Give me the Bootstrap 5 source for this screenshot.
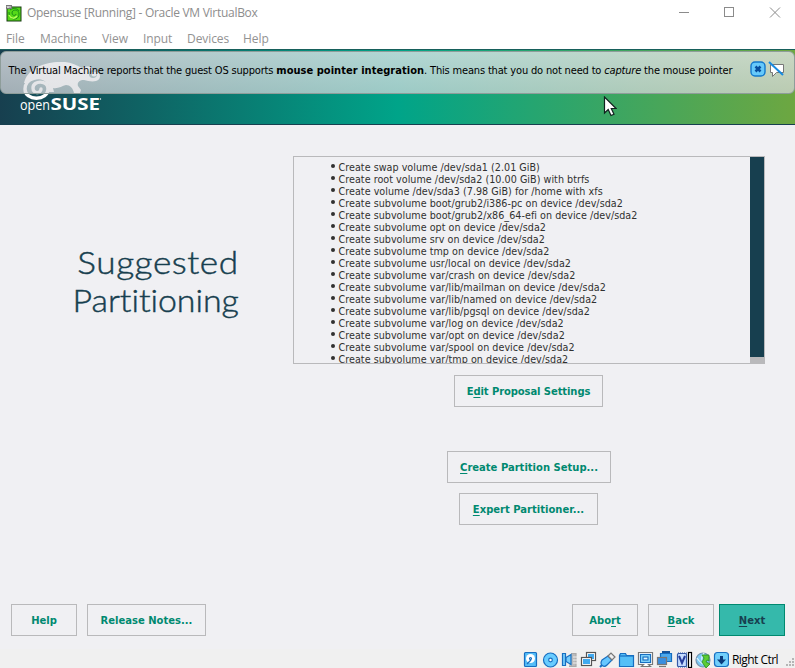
<!DOCTYPE html>
<html lang="en">
<head>
<meta charset="utf-8">
<title>Opensuse [Running] - Oracle VM VirtualBox</title>
<link href="https://cdn.jsdelivr.net/npm/bootstrap@5.3.0/dist/css/bootstrap.min.css" rel="stylesheet">
<style>
body{width:795px;height:668px;overflow:hidden;background:#f0f0f3;font-family:"DejaVu Sans",sans-serif}
svg{display:block;flex:none}
.win-title{height:26px;padding-left:6px;font:12px/26px "Open Sans",sans-serif;color:#8d8d8d}
.win-title .caption{margin-left:5px;letter-spacing:-.28px}
.win-menu{height:23px;padding-left:6px;font:12px/26px "Open Sans",sans-serif;color:#929292;letter-spacing:-.08px}
.win-menu span{white-space:nowrap}
.banner{height:76px;background:linear-gradient(90deg,#173f4f 0,#00a489 50%,#6da741 100%);border-top:1px solid #17605b;border-bottom:1px solid #173f4f}
.brand{position:absolute;left:18px;top:12px}
.notice{position:absolute;left:0;top:1px;width:795px;height:43px;border:1px solid #8e9d9a;border-radius:6px;background:linear-gradient(rgba(228,229,233,.78),rgba(216,217,221,.72));padding-left:7.500px;font:11px/37px "DejaVu Sans Condensed","DejaVu Sans",sans-serif;font-stretch:condensed;color:#000;white-space:nowrap;letter-spacing:-.168px}
.notice b{letter-spacing:.04px}
.pointer{position:absolute;left:603px;top:46px}
.content{height:479px;padding-top:31px}
.heading{width:239px;padding-top:87px;font:300 32px/38px Lato,sans-serif;font-variant-ligatures:none;color:#173f4f;text-align:right;-webkit-text-stroke:.45px #173f4f}
.heading span{display:inline-block;transform-origin:right}
.line-a{letter-spacing:.5px;transform:scaleX(1.1)}
.line-b{transform:scaleX(1.06);letter-spacing:-.05px}
.main-col{width:472px;margin-left:54px}
.proposal{height:208px;border:1px solid #b9b9bb;overflow:hidden}
.proposal ul{margin:5px 0 0;padding:0 0 0 37px;list-style:none;font-size:9.6px;line-height:12px;color:#303030;white-space:nowrap;letter-spacing:.03px}
.proposal li{height:12px}
.proposal li::before{content:"";display:inline-block;width:4px;height:4px;border-radius:50%;background:#303030;margin-right:3.500px;vertical-align:3px}
.scroll-track{width:14px;background:#b9b9bb}
.thumb{height:200px;background:#173f4f}
.yast{--bs-btn-border-radius:0;--bs-btn-padding-x:0;--bs-btn-padding-y:0;--bs-btn-color:#008970;--bs-btn-border-color:#b9b9bb;height:32px;font:bold 10px/30px "DejaVu Sans",sans-serif;padding-top:1px}
.yast u{text-underline-offset:2px;text-decoration-thickness:1px;text-decoration-skip-ink:none}
.yast-next{--bs-btn-color:#173f4f;--bs-btn-bg:#35b9ab;--bs-btn-border-color:#008970}
.w66{width:66px}.w119{width:119px}.w149{width:149px;margin-right:1px}.w164{width:164px}.w139{width:139px;margin-right:1px}
.foot{height:45px;padding:0 10px 0 11px}
.status{height:19px;background:#f0f0f0;padding-left:523px;font:12px/21px "Open Sans",sans-serif;color:#000}
.status svg{margin-top:2px}
</style>
</head>
<body>
<header class="bg-white">
<div class="win-title d-flex align-items-center">
<svg width="16" height="17" viewBox="0 0 16 17"><rect x=".5" y="1.500" width="15" height="15" fill="#173a12"/><rect x="1.500" y="2.500" width="13" height="13" fill="#55d918"/><path d="M3 7c0 9 10 9 10 2 0-5-7-5-7-1 0 3 4 3 4 1M4 5c4-3 8-1 9 1" fill="none" stroke="#199016" stroke-width="1"/><path d="M3 10c2 4 6 4 8 1" fill="none" stroke="#b7ff57" stroke-width="1.500"/><path d="M0 0h6v4H0z" fill="#777"/><path d="M1 1l1 2 1-2M4 1v2" stroke="#fff" fill="none" stroke-width=".8"/></svg>
<span class="caption">Opensuse [Running] - Oracle VM VirtualBox</span>
<svg class="ms-auto" width="116" height="26" viewBox="679 0 116 26" fill="none" stroke="#8b8b8b"><path d="M679 12.500h10"/><rect x="724.500" y="7.500" width="9" height="9"/><path d="M770 7.500l10 10M780 7.500l-10 10"/></svg>
</div>
<nav class="win-menu d-flex"><span style="width:34px">File</span><span style="width:62px">Machine</span><span style="width:41px">View</span><span style="width:44px">Input</span><span style="width:56px">Devices</span><span>Help</span></nav>
</header>
<section class="banner position-relative">
<svg class="brand" width="86" height="54" viewBox="18 62 86 54"><path d="M24 83C27 70 41 63 57 62c11-1 18 2 25 6 2-1 5-2 8-1l9 6c2 3 1 7-3 8-4 1-8 0-12-1-5 0-7 3-6 6l3 4-1 3h-6c-1-5-4-8-8-8-4 1-8 4-13 3l1 4h-7c-1-3-4-6-8-7z" fill="#fff"/><circle cx="37" cy="89" r="12" fill="#17505a"/><path d="M48 82C41 74 25 78 25 89c0 12.500 23 12 23 0 0-9-15-9-15-1 0 6 8 6 8 1" fill="none" stroke="#fff" stroke-width="3.400" stroke-linecap="round"/><circle cx="93" cy="74" r="4" fill="#17605f"/><circle cx="94" cy="74" r="2.500" fill="#fff"/><text x="20" y="110" font-family="Open Sans,sans-serif" font-size="14" fill="#fff"><tspan textLength="30" lengthAdjust="spacingAndGlyphs">open</tspan><tspan x="50.500" font-weight="700" font-size="16" textLength="49.500" lengthAdjust="spacingAndGlyphs">SUSE</tspan></text><circle cx="100.500" cy="99" r=".7" fill="#fff"/></svg>
<div class="notice"><span>The Virtual Machine reports that the guest OS supports <b>mouse pointer integration</b>. This means that you do not need to <i>capture</i> the mouse pointer</span>
<svg class="position-absolute" style="left:749px;top:9px" width="37" height="18" viewBox="0 0 37 18"><rect x="1" y="1" width="14" height="14" rx="4" fill="#66c9fa" stroke="#1278cc" stroke-width="1.400"/><path d="M5.500 5.500l5 5M10.500 5.500l-5 5" stroke="#064d9d" stroke-width="2.500"/><path d="M20.500 3.500h13v8h-7l-4 4v-4h-2z" fill="#fff" stroke="#777"/><path d="M19 1l14 13" stroke="#168ae0" stroke-width="2"/></svg></div>
<svg class="pointer" width="14" height="21" viewBox="0 0 14 21"><path d="M1.500 1v16l3.700-3.500L8 19.500l3-1.300-2.700-5.700h4.800z" fill="#fff" stroke="#10221e" stroke-width="1.200"/></svg>
</section>
<main>
<div class="content d-flex">
<h1 class="heading mb-0"><span class="line-a">Suggested</span><br><span class="line-b">Partitioning</span></h1>
<div class="main-col d-flex flex-column align-items-center">
<div class="proposal d-flex w-100"><ul class="flex-grow-1">
<li>Create swap volume /dev/sda1 (2.01 GiB)</li><li>Create root volume /dev/sda2 (10.00 GiB) with btrfs</li><li>Create volume /dev/sda3 (7.98 GiB) for /home with xfs</li><li>Create subvolume boot/grub2/i386-pc on device /dev/sda2</li><li>Create subvolume boot/grub2/x86_64-efi on device /dev/sda2</li><li>Create subvolume opt on device /dev/sda2</li><li>Create subvolume srv on device /dev/sda2</li><li>Create subvolume tmp on device /dev/sda2</li><li>Create subvolume usr/local on device /dev/sda2</li><li>Create subvolume var/crash on device /dev/sda2</li><li>Create subvolume var/lib/mailman on device /dev/sda2</li><li>Create subvolume var/lib/named on device /dev/sda2</li><li>Create subvolume var/lib/pgsql on device /dev/sda2</li><li>Create subvolume var/log on device /dev/sda2</li><li>Create subvolume var/opt on device /dev/sda2</li><li>Create subvolume var/spool on device /dev/sda2</li><li>Create subvolume var/tmp on device /dev/sda2</li>
</ul><div class="scroll-track"><div class="thumb"></div></div></div>
<button class="btn yast w149" style="margin-top:11px;letter-spacing:-.09px">E<u>d</u>it Proposal Settings</button>
<button class="btn yast w164" style="margin-top:44px"><u>C</u>reate Partition Setup...</button>
<button class="btn yast w139" style="margin-top:10px"><u>E</u>xpert Partitioner...</button>
</div></div>
<div class="foot d-flex"><button class="btn yast w66">Help</button><button class="btn yast w119" style="margin-left:10px">Release Notes...</button><button class="btn yast w66 ms-auto">Abo<u>r</u>t</button><button class="btn yast w66" style="margin-left:10px"><u>B</u>ack</button><button class="btn yast yast-next w66" style="margin-left:5px"><u>N</u>ext</button></div>
</main>
<footer class="status d-flex">
<svg width="206" height="17" viewBox="523 651 206 17" fill="none" stroke="#176fc1" stroke-width="1.200">
<rect x="524.500" y="652.500" width="12" height="14" rx="1" fill="#55bdf7"/><circle cx="530.500" cy="658.500" r="4.500" fill="#fff" stroke="none"/><circle cx="530.500" cy="658.500" r="1" /><path d="M531 660l-4 4"/>
<circle cx="550.500" cy="660" r="7" fill="#68ccff"/><circle cx="550.500" cy="660" r="1.800" fill="#fff"/>
<path d="M571 653.500h5v13h-7" fill="#bbb" stroke="#aaa"/><path d="M573 657h4m-4 3h4m-4 3h4" stroke="#eee"/><path d="M562.500 653.500h3v12h-3z" fill="#75ccfb"/><path d="M566 657.500l5-3v10l-5-3z" fill="#75ccfb"/>
<rect x="586.500" y="652.500" width="9" height="8" fill="#fff" stroke="#555"/><rect x="588" y="654" width="6" height="5" fill="#41aaf0" stroke="none"/><rect x="581.500" y="657.500" width="10" height="8" fill="#fff" stroke="#555"/><rect x="583" y="659" width="7" height="5" fill="#41aaf0" stroke="none"/>
<path d="M602 660l6-4 4 4-5 5c-3 3-8 0-5-5z" fill="#66c7ff"/><path d="M608 656l3-3 4 4-3 3z" fill="#eee" stroke="#777"/><path d="M602 665l-2 2" stroke-width="2"/>
<path d="M619.500 666.500v-11l1-2h5l1 2h7v11z" fill="#55bff7"/><path d="M620 656h14"/>
<path d="M638.500 652.500h14v12h-4l2 2h-9l2-2h-5z" fill="#fff" stroke="#777"/><rect x="640.500" y="654.500" width="10" height="8" fill="#8cdcff"/><rect x="643" y="657" width="5" height="3" fill="#e3f6ff"/>
<path d="M660.500 653.500h11v8h-11z" fill="#4ba9ee"/><path d="M662 652h8" stroke="#15549b" stroke-width="2"/><rect x="657.500" y="657.500" width="9" height="7" fill="#398ee0" stroke="#777"/><path d="M659 666.500h7" stroke="#777"/>
<rect x="677.500" y="653.500" width="9" height="13" rx="1" fill="#c5dcff" stroke="#3459a7"/><path d="M679 656l3 7 3-7" stroke="#263d9a" stroke-width="2"/><path d="M678 653h9m-9 14h9" stroke="#3459a7" stroke-dasharray="1 1"/><rect x="688.500" y="652.500" width="3" height="15" fill="#fff" stroke="#000"/>
<circle cx="703" cy="660" r="7" fill="#7bc9f4" stroke="#7893ae"/><path d="M697 658q6 9 12 6M704 653q-5 6 1 12" stroke="#e1f5ff"/><path d="M702 655h7v6l-2-1-1 2 4 2-4 4-4-6 2-4z" fill="#5ccc35" stroke="#238c20" stroke-width=".8"/>
<rect x="714.500" y="652.500" width="14" height="14" rx="3" fill="#71cffb"/><path d="M721.500 656v4" stroke="#0a3c7d" stroke-width="3"/><path d="M717 659.500h9l-4.500 5z" fill="#0a3c7d" stroke="none"/>
</svg>
<span style="margin-left:3px;letter-spacing:-.55px;white-space:nowrap">Right Ctrl</span>
<svg class="ms-auto" width="12" height="17" viewBox="0 0 12 17" fill="#b5b5b5"><path d="M9 7h2v2H9zM6 10h2v2H6zM9 10h2v2H9zM3 13h2v2H3zM6 13h2v2H6zM9 13h2v2H9z"/></svg>
</footer>
<script src="https://cdn.jsdelivr.net/npm/bootstrap@5.3.0/dist/js/bootstrap.bundle.min.js"></script>
</body>
</html>
